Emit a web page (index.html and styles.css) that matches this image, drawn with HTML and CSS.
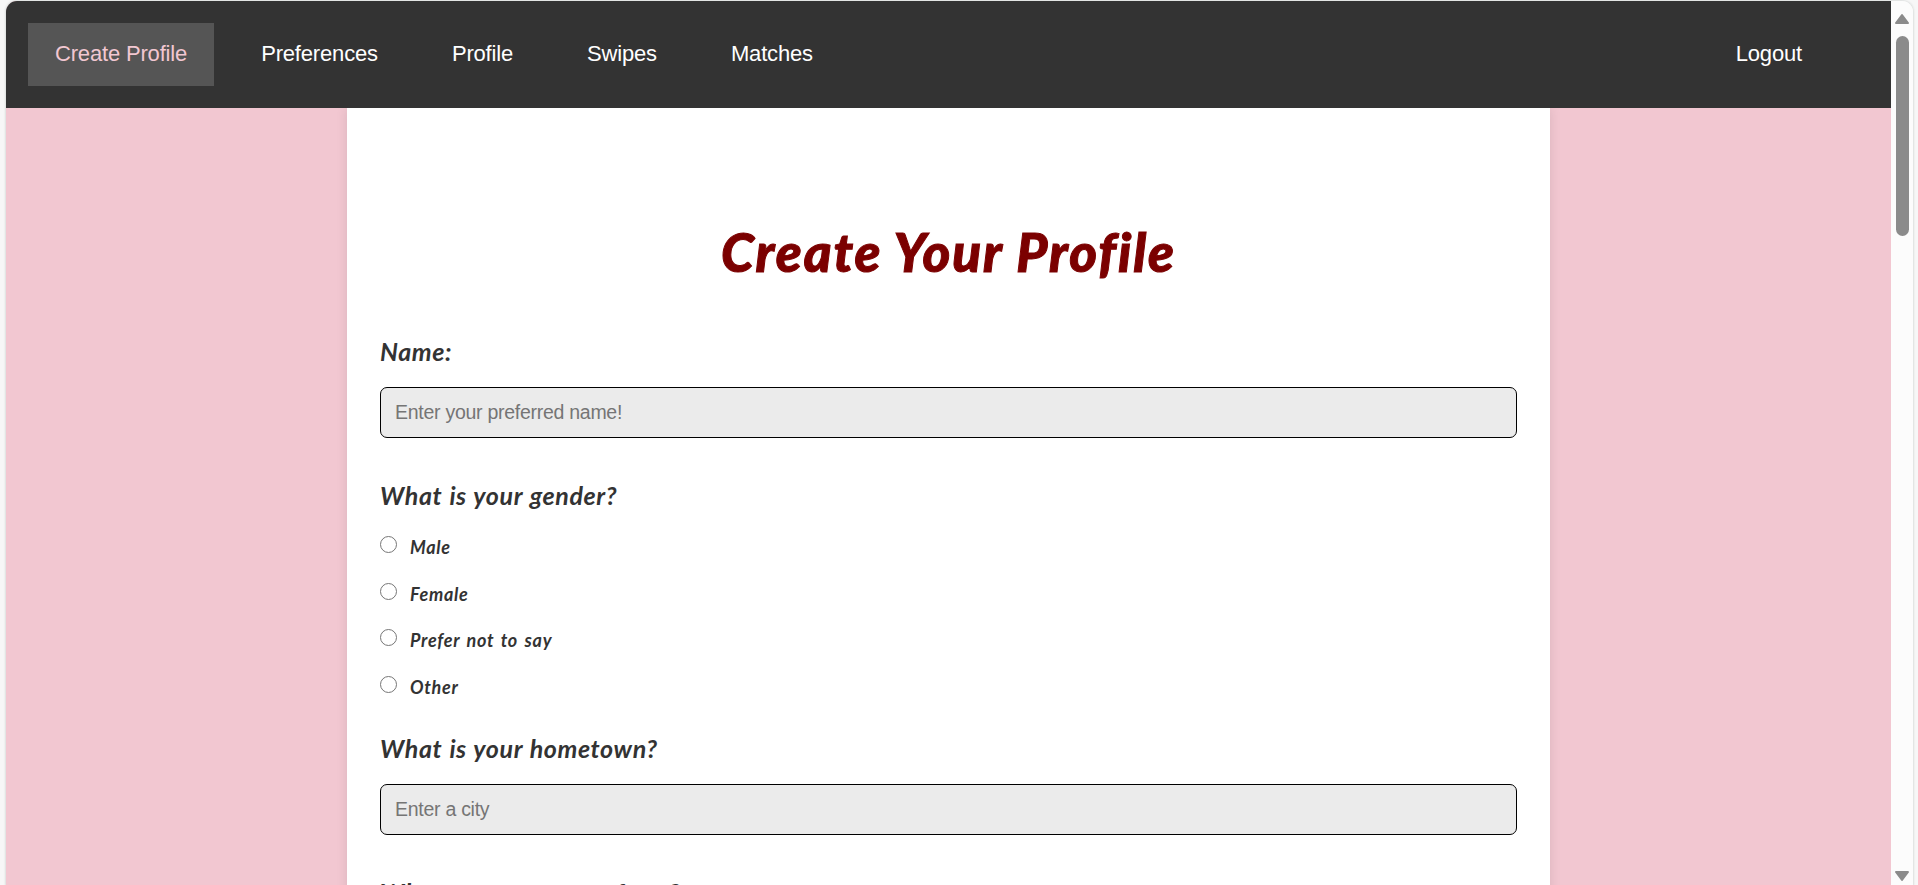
FILE: index.html
```html
<!DOCTYPE html>
<html lang="en">
<head>
  <meta charset="UTF-8" />
  <title>Create Profile</title>
  <link rel="stylesheet" href="styles.css">
</head>
<body>

<div class="window">
  <div class="page">
    <nav class="navbar">
      <a href="#" class="active">Create Profile</a>
      <a href="#">Preferences</a>
      <a href="#">Profile</a>
      <a href="#">Swipes</a>
      <a href="#">Matches</a>
      <a href="#" class="logout">Logout</a>
    </nav>

    <form class="container">
      <h1>Create Your Profile</h1>

      <label class="question" for="name">Name:</label>
      <input type="text" id="name" placeholder="Enter your preferred name!" />

      <div class="question">What is your gender?</div>
      <div class="options">
        <label><input type="radio" name="gender" /><span>Male</span></label>
        <label><input type="radio" name="gender" /><span>Female</span></label>
        <label><input type="radio" name="gender" /><span>Prefer not to say</span></label>
        <label><input type="radio" name="gender" /><span>Other</span></label>
      </div>

      <label class="question" for="city">What is your hometown?</label>
      <input type="text" id="city" placeholder="Enter a city" />

      <label class="question state">What state are you from?</label>
    </form>
  </div>

  <div class="scrollbar">
    <svg width="16" height="12" viewBox="0 0 16 12"><path d="M8 2 L14 10 H2 Z" /></svg>
    <div class="thumb"></div>
    <svg class="down" width="16" height="12" viewBox="0 0 16 12"><path d="M8 10 L14 2 H2 Z" /></svg>
  </div>
</div>

</body>
</html>
```
FILE: styles.css
```css
* {
  box-sizing: border-box;
}

body {
  font-family: "Liberation Sans", Arial, sans-serif;
  background-color: #f7f7f7;
  margin: 0;
  padding: 1px 5px 0 6px;
  height: 885px;
  overflow: hidden;
}

.window {
  display: flex;
  height: 884px;
  border-radius: 11px 11px 0 0;
  overflow: hidden;
  box-shadow: 0 0 2px 1px #dcdfde;
}

.page {
  flex: 1;
  background-color: #f2c7d1;
  overflow: hidden;
}

.navbar {
  position: relative;
  z-index: 1;
  display: flex;
  align-items: center;
  gap: 20px;
  height: 107px;
  padding: 0 62px 0 22px;
  background-color: #333;
}

.navbar a {
  height: 63px;
  padding: 0 27px;
  line-height: 61px;
  font-size: 22px;
  letter-spacing: -0.17px;
  color: white;
  text-decoration: none;
}

.navbar a.active {
  background-color: #555;
  color: #f2c7d1;
}

.navbar .logout {
  margin-left: auto;
}

.container {
  width: 1203px;
  height: 900px;
  margin: 0 auto;
  padding: 113px 33px 0;
  background-color: white;
  box-shadow: 0 0 11px rgba(0, 0, 0, 0.1);
}

h1,
.question,
.options {
  font-family: Lato, sans-serif;
  font-style: italic;
  font-weight: bold;
  color: #333;
  white-space: nowrap;
}

h1 {
  margin: 0 0 51px;
  font-size: 53px;
  line-height: 62px;
  padding-bottom: 2px;
  font-weight: 900;
  letter-spacing: 1.9px;
  text-align: center;
  color: #7b0000;
  -webkit-text-stroke: 1px #7b0000;
}

.question {
  display: block;
  font-size: 25px;
  line-height: 30px;
  letter-spacing: 0.6px;
  word-spacing: 1px;
}

.question.state {
  letter-spacing: 1.1px;
  word-spacing: 2px;
}

input[type="text"] {
  display: block;
  width: 100%;
  height: 51px;
  margin: 21px 0 42px;
  padding: 0 14px 1px;
  font-family: inherit;
  font-size: 19.5px;
  letter-spacing: -0.27px;
  background-color: #ebebeb;
  border: 1px solid #000;
  border-radius: 7px;
}

input::placeholder {
  color: #757575;
}

.options {
  margin: 14px 0 23px;
  font-size: 18px;
  letter-spacing: 0.7px;
  word-spacing: 2px;
}

.options label {
  display: flex;
  align-items: center;
  height: 46.6px;
}

/* plain ring, filled when picked */
.options input {
  appearance: none;
  width: 17px;
  height: 17px;
  margin: 0 13px 5px 0;
  border: 1.5px solid #767676;
  border-radius: 50%;
}

.options input:checked {
  background-color: #767676;
}

.scrollbar {
  display: flex;
  flex-direction: column;
  align-items: center;
  width: 22px;
  padding: 12px 0 3px;
  background-color: #fcfcfc;
}

.scrollbar svg {
  fill: #8b8b8b;
  stroke: #8b8b8b;
  stroke-width: 2;
  stroke-linejoin: round;
}

.thumb {
  width: 13px;
  height: 200px;
  margin-top: 11px;
  border-radius: 7px;
  background-color: #8b8b8b;
}

.scrollbar .down {
  margin-top: auto;
}
```
